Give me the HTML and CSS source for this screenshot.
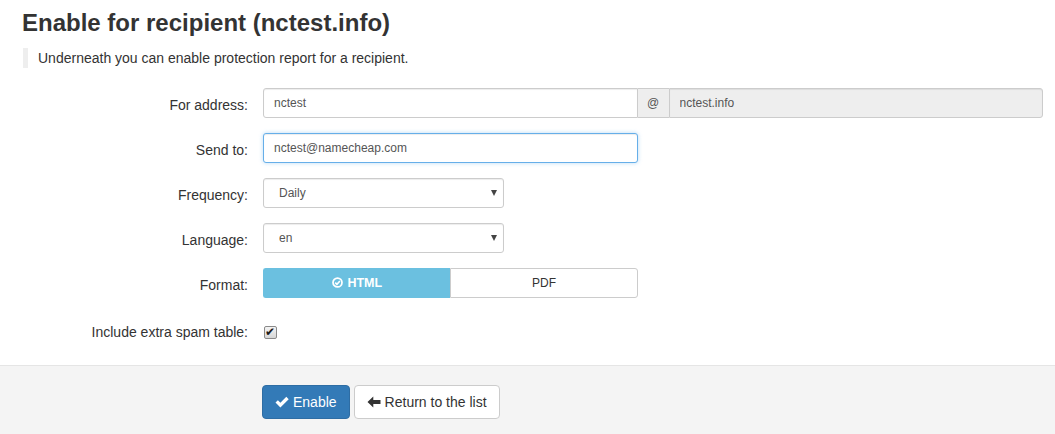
FILE: index.html
```html
<!DOCTYPE html>
<html lang="en">

<head>
    <meta charset="UTF-8">
    <meta name="viewport" content="width=device-width, initial-scale=1.0">
    <title>Enable for recipient</title>
    <link rel="stylesheet" href="styles.css">
</head>

<body>

    <h3 class="page-title">Enable for recipient (nctest.info)</h3>
    <p class="note">Underneath you can enable protection report for a recipient.</p>

    <form class="report-form">
        <div class="form-row">
            <label class="row-label" for="address">For address:</label>
            <div class="input-group">
                <input class="input" id="address" type="text" value="nctest">
                <span class="addon">@</span>
                <input class="input" type="text" value="nctest.info" readonly>
            </div>
        </div>

        <div class="form-row">
            <label class="row-label" for="sendTo">Send to:</label>
            <input class="input input-focus send-to" id="sendTo" type="text" value="nctest@namecheap.com">
        </div>

        <div class="form-row">
            <label class="row-label" for="frequency">Frequency:</label>
            <div class="select-wrap">
                <select class="input select" id="frequency">
                    <option>Daily</option>
                    <option>Weekly</option>
                    <option>Monthly</option>
                </select>
            </div>
        </div>

        <div class="form-row">
            <label class="row-label" for="language">Language:</label>
            <div class="select-wrap">
                <select class="input select" id="language">
                    <option>en</option>
                    <option>de</option>
                    <option>fr</option>
                </select>
            </div>
        </div>

        <div class="form-row">
            <span class="row-label">Format:</span>
            <div class="btn-group">
                <button type="button" class="toggle active">
                    <svg class="icon-circle-ok" width="11" height="11" viewBox="0 0 12 12">
                        <circle cx="6" cy="6" r="4.9" fill="none" stroke="#fff" stroke-width="1.9" />
                        <path d="M3.5 6.1 L5.4 7.9 L8.6 4.4" fill="none" stroke="#fff" stroke-width="1.8" />
                    </svg>
                    HTML
                </button>
                <button type="button" class="toggle">PDF</button>
            </div>
        </div>

        <div class="form-row check-row">
            <label class="row-label" for="spamTable">Include extra spam table:</label>
            <input class="check" id="spamTable" type="checkbox" checked>
        </div>
    </form>

    <div class="form-actions">
        <button type="button" class="btn btn-primary">
            <svg width="14" height="14" viewBox="0 0 14 14">
                <path d="M0.5 7.6 L2.9 5.2 L5.4 7.7 L11.3 1.8 L13.7 4.2 L5.4 12.5 Z" fill="#fff" />
            </svg>
            Enable
        </button>
        <button type="button" class="btn btn-default">
            <svg width="14" height="14" viewBox="0 0 14 14">
                <path d="M0.5 7 L6.3 1.5 L6.3 5 L13.5 5 L13.5 9 L6.3 9 L6.3 12.5 Z" fill="#333" />
            </svg>
            Return to the list
        </button>
    </div>

</body>

</html>
```

FILE: styles.css
```css
* {
    margin: 0;
    padding: 0;
    box-sizing: border-box;
    font-family: 'Liberation Sans', Arial, sans-serif;
}

body {
    background: #fff;
    color: #333;
    font-size: 14px;
    line-height: 20px;
}

.page-title {
    margin: 10px 0 0 22px;
    font-size: 24px;
    line-height: 26px;
    font-weight: bold;
}

.note {
    margin: 12px 0 0 23px;
    padding-left: 10px;
    border-left: 5px solid #eee;
    line-height: 20px;
}

.report-form {
    margin-top: 20px;
    padding: 0 12px 0 23px;
}

.form-row {
    display: grid;
    grid-template-columns: 225px 1fr;
    column-gap: 15px;
    align-items: start;
    margin-bottom: 15px;
}

.row-label {
    text-align: right;
    padding-top: 7px;
    line-height: 20px;
}

.input {
    display: block;
    height: 30px;
    padding: 5px 10px;
    font-size: 12px;
    line-height: 18px;
    color: #555;
    background: #fff;
    border: 1px solid #ccc;
    border-radius: 3px;
    box-shadow: inset 0 1px 1px rgba(0, 0, 0, 0.075);
    outline: none;
}

.input[readonly] {
    background: #eee;
}

.input-group {
    display: flex;
}

.input-group .input {
    flex: 1;
    min-width: 0;
}

.input-group .input:first-child {
    border-radius: 3px 0 0 3px;
}

.input-group .input:last-child {
    border-radius: 0 3px 3px 0;
}

.addon {
    width: 31px;
    height: 30px;
    line-height: 28px;
    text-align: center;
    font-size: 12px;
    color: #555;
    background: #eee;
    border: 1px solid #ccc;
    border-left: none;
    border-right: none;
}

.send-to {
    width: 375px;
}

.input-focus {
    border-color: #66afe9;
    box-shadow: inset 0 1px 1px rgba(0, 0, 0, 0.075), 0 0 4px rgba(102, 175, 233, 0.45);
}

.select-wrap {
    position: relative;
    width: 241px;
}

.select {
    width: 100%;
    padding-left: 15px;
    appearance: none;
    -webkit-appearance: none;
}

/* small dropdown caret on the right of the select */
.select-wrap::after {
    content: "";
    position: absolute;
    right: 7px;
    top: 12px;
    border-left: 3.5px solid transparent;
    border-right: 3.5px solid transparent;
    border-top: 6px solid #444;
    pointer-events: none;
}

.btn-group {
    display: flex;
    width: 375px;
}

.toggle {
    flex: 1;
    height: 30px;
    font-size: 12px;
    color: #333;
    background: #fff;
    border: 1px solid #ccc;
    cursor: pointer;
}

.toggle:first-child {
    border-radius: 3px 0 0 3px;
    border-right: none;
}

.toggle:last-child {
    border-radius: 0 3px 3px 0;
}

.toggle.active {
    background: #6bc0e0;
    border-color: #6bc0e0;
    color: #fff;
    font-size: 12.5px;
    font-weight: bold;
}

.icon-circle-ok {
    vertical-align: -1px;
    margin-right: 1px;
}

.check-row {
    margin-bottom: 23px;
}

.check-row .row-label {
    padding-top: 9px;
}

.check {
    appearance: none;
    -webkit-appearance: none;
    position: relative;
    width: 13px;
    height: 13px;
    margin: 13px 0 0 1px;
    border: 1px solid #8a8a8a;
    border-radius: 2px;
    background: linear-gradient(#f4f4f4, #d6d6d6);
}

.check:checked::after {
    content: "\2714";
    position: absolute;
    left: 0;
    top: -4px;
    font-size: 12px;
    line-height: 18px;
    color: #1a1a1a;
    font-family: 'DejaVu Sans', sans-serif;
}

.form-actions {
    background: #f4f4f4;
    border-top: 1px solid #e5e5e5;
    padding: 19px 0 20px 262px;
    display: flex;
    gap: 4px;
}

.btn {
    height: 34px;
    padding: 6px 12px;
    font-size: 14px;
    line-height: 20px;
    border: 1px solid transparent;
    border-radius: 4px;
    cursor: pointer;
    display: flex;
    align-items: center;
    gap: 4px;
}

.btn-primary {
    background: #337ab7;
    border-color: #2e6da4;
    color: #fff;
}

.btn-default {
    background: #fff;
    border-color: #ccc;
    color: #333;
}
```
